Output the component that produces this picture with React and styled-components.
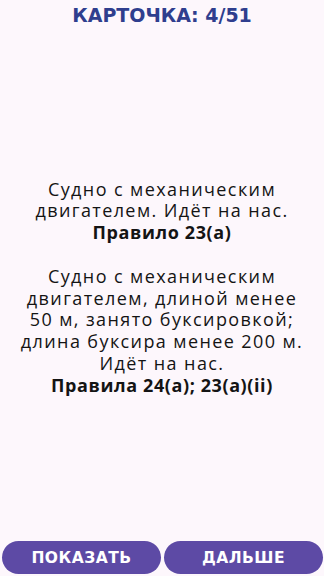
import React from "react";
import styled, { createGlobalStyle } from "styled-components";

const GlobalStyle = createGlobalStyle`
  html, body {
    margin: 0;
    padding: 0;
    background: #fdf7fc;
  }
  #root {
    height: 100vh;
  }
`;

const Screen = styled.div`
  height: 100vh;
  display: flex;
  flex-direction: column;
  background: #fdf7fc;
  box-sizing: border-box;
`;

const Title = styled.h1`
  margin: 0;
  padding-top: 3px;
  text-align: center;
  font-family: "DejaVu Sans", sans-serif;
  font-weight: 800;
  font-size: 19px;
  line-height: 24px;
  color: #2f3e8e;
`;

const Content = styled.div`
  flex: 1;
  display: flex;
  flex-direction: column;
  justify-content: center;
  align-items: center;
  padding: 7px 4px 0;
`;

const CardText = styled.p`
  margin: 0;
  text-align: center;
  font-family: "Open Sans", sans-serif;
  font-size: 18px;
  letter-spacing: 1.4px;
  line-height: 21.8px;
  color: #141414;
  white-space: nowrap;
`;

const Rule = styled.b`
  font-weight: 700;
  letter-spacing: 0.6px;
`;

const Bar = styled.div`
  display: flex;
  gap: 3px;
  padding: 0 1px 2px 2px;
`;

const Button = styled.button`
  flex: 1;
  height: 33px;
  border: none;
  border-radius: 17px;
  background: #5d4aa5;
  color: #ffffff;
  font-family: "DejaVu Sans", sans-serif;
  font-weight: 700;
  font-size: 15.5px;
  letter-spacing: 0.5px;
  cursor: pointer;
`;

export default function App() {
  return (
    <>
      <GlobalStyle />
      <Screen>
        <Title>КАРТОЧКА: 4/51</Title>
        <Content>
          <CardText>
            Судно с механическим
            <br />
            двигателем. Идёт на нас.
            <br />
            <Rule>Правило 23(a)</Rule>
            <br />
            <br />
            Судно с механическим
            <br />
            двигателем, длиной менее
            <br />
            50 м, занято буксировкой;
            <br />
            длина буксира менее 200 м.
            <br />
            Идёт на нас.
            <br />
            <Rule>Правила 24(a); 23(a)(ii)</Rule>
          </CardText>
        </Content>
        <Bar>
          <Button>ПОКАЗАТЬ</Button>
          <Button>ДАЛЬШЕ</Button>
        </Bar>
      </Screen>
    </>
  );
}
